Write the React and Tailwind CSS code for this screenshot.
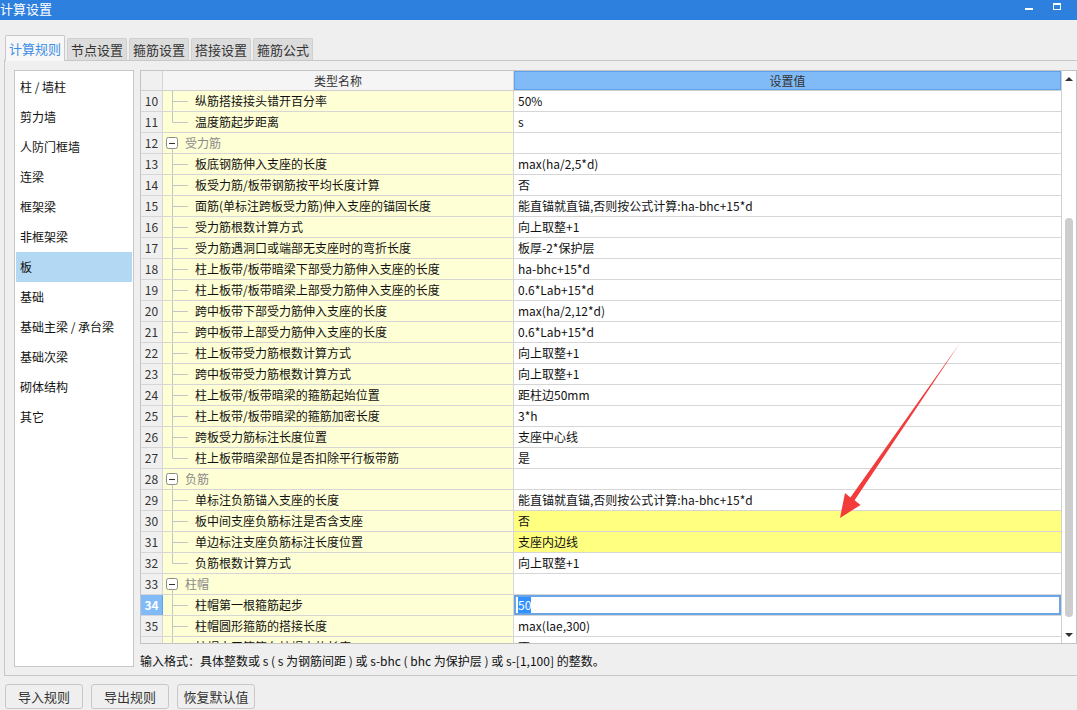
import React from 'react'

const MENU = ['柱 / 墙柱', '剪力墙', '人防门框墙', '连梁', '框架梁', '非框架梁', '板', '基础', '基础主梁 / 承台梁', '基础次梁', '砌体结构', '其它']

const TABS = ['计算规则', '节点设置', '箍筋设置', '搭接设置', '箍筋公式']

const ROWS = [
  { n: 10, name: '纵筋搭接接头错开百分率', value: '50%' },
  { n: 11, name: '温度筋起步距离', value: 's', last: true },
  { n: 12, group: '受力筋' },
  { n: 13, name: '板底钢筋伸入支座的长度', value: 'max(ha/2,5*d)' },
  { n: 14, name: '板受力筋/板带钢筋按平均长度计算', value: '否' },
  { n: 15, name: '面筋(单标注跨板受力筋)伸入支座的锚固长度', value: '能直锚就直锚,否则按公式计算:ha-bhc+15*d' },
  { n: 16, name: '受力筋根数计算方式', value: '向上取整+1' },
  { n: 17, name: '受力筋遇洞口或端部无支座时的弯折长度', value: '板厚-2*保护层' },
  { n: 18, name: '柱上板带/板带暗梁下部受力筋伸入支座的长度', value: 'ha-bhc+15*d' },
  { n: 19, name: '柱上板带/板带暗梁上部受力筋伸入支座的长度', value: '0.6*Lab+15*d' },
  { n: 20, name: '跨中板带下部受力筋伸入支座的长度', value: 'max(ha/2,12*d)' },
  { n: 21, name: '跨中板带上部受力筋伸入支座的长度', value: '0.6*Lab+15*d' },
  { n: 22, name: '柱上板带受力筋根数计算方式', value: '向上取整+1' },
  { n: 23, name: '跨中板带受力筋根数计算方式', value: '向上取整+1' },
  { n: 24, name: '柱上板带/板带暗梁的箍筋起始位置', value: '距柱边50mm' },
  { n: 25, name: '柱上板带/板带暗梁的箍筋加密长度', value: '3*h' },
  { n: 26, name: '跨板受力筋标注长度位置', value: '支座中心线' },
  { n: 27, name: '柱上板带暗梁部位是否扣除平行板带筋', value: '是', last: true },
  { n: 28, group: '负筋' },
  { n: 29, name: '单标注负筋锚入支座的长度', value: '能直锚就直锚,否则按公式计算:ha-bhc+15*d' },
  { n: 30, name: '板中间支座负筋标注是否含支座', value: '否', hl: true },
  { n: 31, name: '单边标注支座负筋标注长度位置', value: '支座内边线', hl: true },
  { n: 32, name: '负筋根数计算方式', value: '向上取整+1', last: true },
  { n: 33, group: '柱帽' },
  { n: 34, name: '柱帽第一根箍筋起步', value: '50', editing: true },
  { n: 35, name: '柱帽圆形箍筋的搭接长度', value: 'max(lae,300)' },
  { n: 36, name: '柱帽水平箍筋在柱帽中的长度', value: '否' },
]

// tree guide lines drawn in the name column
function Tree({ group, last }) {
  return (
    <svg width="32" height="20" className="shrink-0" aria-hidden="true">
      {group ? (
        <>
          <rect x="3.5" y="4.5" width="11" height="11" rx="2" fill="#fff" stroke="#8a8a8a" />
          <line x1="6" y1="10.5" x2="12" y2="10.5" stroke="#333" />
          <line x1="9.5" y1="15.5" x2="9.5" y2="20" stroke="#c4c4c4" />
        </>
      ) : (
        <>
          <line x1="9.5" y1="0" x2="9.5" y2={last ? 10.5 : 20} stroke="#c4c4c4" />
          <line x1="9.5" y1="10.5" x2="25" y2="10.5" stroke="#c4c4c4" />
        </>
      )}
    </svg>
  )
}

function Row({ r }) {
  const sel = r.editing
  return (
    <div className="flex h-[21px] shrink-0 border-b border-[#d6d6d6]">
      <div
        className={
          sel
            ? 'flex w-[22px] items-center justify-center border-r border-[#5da2ee] bg-[#80bbf7] font-bold text-white'
            : 'flex w-[22px] items-center justify-center border-r border-[#d6d6d6] bg-[#f0f0f0] text-[#333]'
        }
      >
        {r.n}
      </div>
      <div className="flex w-[351px] items-center border-r border-[#d6d6d6] bg-[#ffffd6]">
        <Tree group={!!r.group} last={r.last} />
        {r.group ? (
          <span className="-ml-[10px] text-[#8a8a8a]">{r.group}</span>
        ) : (
          <span className="text-[#111]">{r.name}</span>
        )}
      </div>
      {sel ? (
        <div className="flex flex-1 items-center border-2 border-[#6aa6e6] bg-white pl-[2px]">
          <span className="bg-[#3390ff] leading-[16px] text-white">{r.value}</span>
        </div>
      ) : (
        <div className={'flex flex-1 items-center pl-[4px] text-[#111] ' + (r.hl ? 'bg-[#ffff80]' : 'bg-white')}>
          {r.value}
        </div>
      )}
    </div>
  )
}

export default function App() {
  return (
    <div className="relative flex h-[710px] w-[1077px] flex-col overflow-hidden bg-[#efefef] font-['Noto_Sans_CJK_SC',sans-serif] text-[12px] leading-[16px] text-[#222]">
      {/* title bar */}
      <div className="flex h-[20px] shrink-0 items-center justify-between bg-[#2e80df] text-[13px] text-white">
        <span className="-mt-[2px]">计算设置</span>
        <div className="flex h-full items-start">
          <span className="mt-[8px] mr-[20px] h-[2px] w-[8px] bg-white" />
          <span className="mt-[3px] mr-[16px] h-[7px] w-[8px] border border-t-2 border-white" />
        </div>
      </div>

      {/* tabs */}
      <div className="flex h-[40px] shrink-0 items-end gap-[2px] pl-[5px]">
        {TABS.map((t, i) =>
          i === 0 ? (
            <div
              key={t}
              className="relative z-10 -mb-px flex h-[26px] w-[60px] items-center justify-center rounded-t-[2px] border border-b-0 border-[#c8c8c8] bg-[#f7f7f7] text-[13px] text-[#3d8ee6]"
            >
              {t}
            </div>
          ) : (
            <div
              key={t}
              className="flex h-[22px] w-[60px] items-center justify-center rounded-t-[2px] border border-b-0 border-[#d0d0d0] bg-[#dcdcdc] text-[13px] text-[#333]"
            >
              {t}
            </div>
          )
        )}
      </div>

      {/* panel */}
      <div className="ml-[4px] flex h-[616px] w-[1090px] shrink-0 border border-[#c8c8c8] pt-[9px] pl-[9px]">
        <div className="flex h-[597px] w-[120px] shrink-0 flex-col border border-[#c8c8c8] bg-white px-px pt-px">
          {MENU.map((m) => (
            <div
              key={m}
              className={'flex h-[30px] shrink-0 items-center pl-[4px] text-[#111] ' + (m === '板' ? 'bg-[#b3d8f4]' : '')}
            >
              {m}
            </div>
          ))}
        </div>

        <div className="ml-[6px] flex flex-col">
          {/* grid */}
          <div className="flex h-[574px] w-[937px] border border-[#c4c4c4] bg-white">
            <div className="flex w-[920px] flex-col overflow-hidden">
              <div className="flex h-[20px] shrink-0 border-b border-[#d0d0d0]">
                <div className="w-[22px] border-r border-[#d6d6d6] bg-[#f0f0f0]" />
                <div className="flex w-[351px] items-center justify-center border-r border-[#d6d6d6] bg-[#f5f5f5] text-[#333]">
                  类型名称
                </div>
                <div className="flex flex-1 items-center justify-center border border-[#5da2ee] bg-[#80bbf7] text-[#333]">
                  设置值
                </div>
              </div>
              {ROWS.map((r) => (
                <Row key={r.n} r={r} />
              ))}
            </div>
            {/* scrollbar */}
            <div className="flex w-[15px] flex-col border-l border-[#d0d0d0] bg-white">
              <div className="flex h-[16px] shrink-0 items-center justify-center">
                <span className="h-0 w-0 border-x-[4px] border-b-[4px] border-x-transparent border-b-[#333]" />
              </div>
              <div className="flex-1 pt-[131px]">
                <div className="mx-auto h-[399px] w-[8px] rounded-full bg-[#cdcdcd]" />
              </div>
              <div className="flex h-[16px] shrink-0 items-center justify-center">
                <span className="h-0 w-0 border-x-[4px] border-t-[4px] border-x-transparent border-t-[#333]" />
              </div>
            </div>
          </div>
          <p className="mt-[9px] text-[#111]">
            输入格式：具体整数或 s ( s 为钢筋间距 ) 或 s-bhc ( bhc 为保护层 ) 或 s-[1,100] 的整数。
          </p>
        </div>
      </div>

      {/* buttons */}
      <div className="mt-[8px] flex gap-[8px] pl-[5px]">
        {['导入规则', '导出规则', '恢复默认值'].map((b) => (
          <button
            key={b}
            className="flex h-[25px] w-[78px] items-center justify-center rounded-[3px] border border-[#c8c8c8] bg-[#efefef] text-[13px] text-[#333]"
          >
            {b}
          </button>
        ))}
      </div>

      {/* red annotation arrow */}
      <svg className="pointer-events-none absolute top-0 left-0" width="1077" height="710" aria-hidden="true">
        <polygon
          points="960,343 854.6,500.3 860.5,505 840,518 845,493 850.4,497.5"
          fill="#f23c3c"
        />
      </svg>
    </div>
  )
}
